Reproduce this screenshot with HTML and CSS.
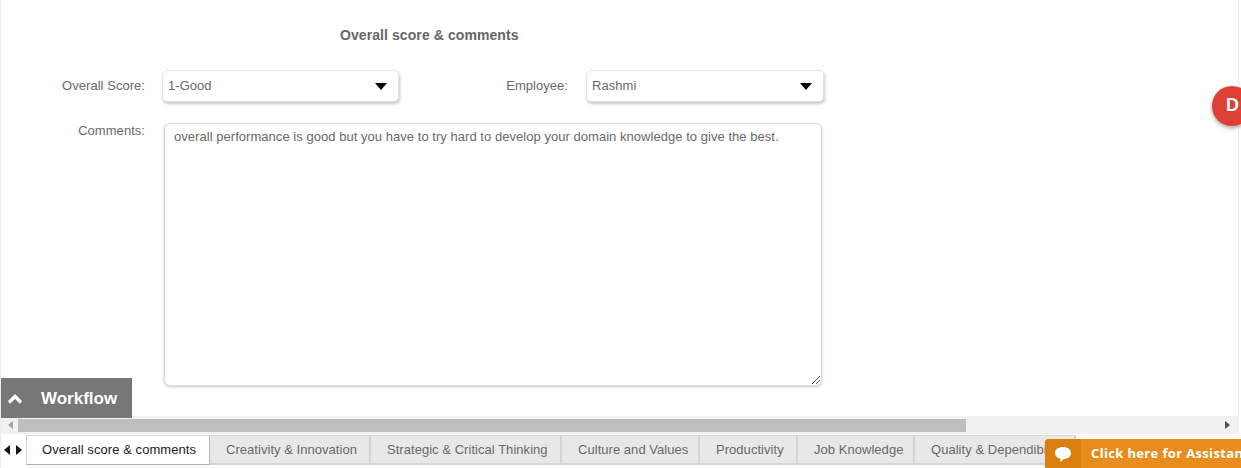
FILE: index.html
```html
<!DOCTYPE html>
<html lang="en">
<head>
<meta charset="utf-8">
<title>Overall score &amp; comments</title>
<link rel="stylesheet" href="styles.css">
</head>
<body>
<div class="page">
  <main class="content">
    <h1 class="title">Overall score &amp; comments</h1>
    <div class="row">
      <label class="label label-score">Overall Score:</label>
      <div class="select select-score"><span>1-Good</span><i class="caret"></i></div>
      <label class="label label-employee">Employee:</label>
      <div class="select select-employee"><span>Rashmi</span><i class="caret"></i></div>
    </div>
    <div class="row-comments">
      <label class="label label-comments">Comments:</label>
      <div class="textarea">overall performance is good but you have to try hard to develop your domain knowledge to give the best.
        <svg class="grip" width="8" height="8" viewBox="0 0 8 8"><path d="M0 8L8 0M4 8L8 4" stroke="#555" stroke-width="1" fill="none"/></svg>
      </div>
    </div>
  </main>
  <div class="hscroll">
    <svg class="arrow" width="5" height="8" viewBox="0 0 5 8"><path d="M5 0L0 4L5 8Z" fill="#a3a3a3"/></svg>
    <div class="track"><div class="thumb"></div></div>
    <svg class="arrow" width="5" height="8" viewBox="0 0 5 8"><path d="M0 0L5 4L0 8Z" fill="#505050"/></svg>
  </div>
  <nav class="tabbar">
    <div class="tabnav">
      <svg width="6" height="10" viewBox="0 0 6 10"><path d="M6 0L0 5L6 10Z" fill="#111"/></svg>
      <svg width="6" height="10" viewBox="0 0 6 10"><path d="M0 0L6 5L0 10Z" fill="#111"/></svg>
    </div>
    <div class="tab active">Overall score &amp; comments</div>
    <div class="tab tab-creativity">Creativity &amp; Innovation</div>
    <div class="tab tab-strategic">Strategic &amp; Critical Thinking</div>
    <div class="tab tab-culture">Culture and Values</div>
    <div class="tab tab-productivity">Productivity</div>
    <div class="tab tab-job">Job Knowledge</div>
    <div class="tab tab-quality">Quality &amp; Dependibility</div>
  </nav>
  <div class="workflow">
    <svg width="16" height="10" viewBox="0 0 16 10"><path d="M2 8.5L8 2.5L14 8.5" fill="none" stroke="#fff" stroke-width="3.4"/></svg>
    <span>Workflow</span>
  </div>
  <div class="badge">D</div>
  <div class="chat">
    <div class="chat-icon">
      <svg width="18" height="17" viewBox="0 0 18 17"><path d="M9 1C13.7 1 17 3.2 17 7C17 10.8 13.7 13 9.8 13L6.5 16L6.2 12.6C3 12 1 10 1 7C1 3.2 4.3 1 9 1Z" fill="#fff"/></svg>
    </div>
    <div class="chat-text">Click here for Assistance</div>
  </div>
</div>
</body>
</html>
```
FILE: styles.css
```css
* { box-sizing: border-box; }
html, body { margin: 0; padding: 0; }
body { font-family: "Liberation Sans", Arial, sans-serif; font-size: 13px; letter-spacing: .04px; color: #696969; background: #fff; overflow: hidden; }
.page { position: relative; width: 1241px; height: 468px; overflow: hidden; display: flex; flex-direction: column; border-left: 1px solid #ededed; }
.content { flex: 0 0 416px; border-right: 1px solid #f0f0f0; margin-right: 2px; padding-top: 27px; }
.title { margin: 0 0 27px 339px; font-size: 14px; line-height: 16px; font-weight: bold; letter-spacing: .08px; color: #666; }
.row { display: flex; align-items: flex-start; height: 32px; }
.label { line-height: 16px; text-align: right; }
.label-score { width: 144px; padding-top: 8px; }
.select { position: relative; height: 32px; border: 1px solid #e2e2e2; border-radius: 5px; box-shadow: 1px 2px 3px rgba(0,0,0,.22); padding: 7px 5px; line-height: 16px; background: #fff; }
.select-score { width: 237px; margin-left: 17px; }
.label-employee { width: 169px; padding-top: 8px; }
.select-employee { width: 238px; margin-left: 18px; }
.caret { position: absolute; right: 11px; top: 12px; width: 0; height: 0; border-left: 6px solid transparent; border-right: 6px solid transparent; border-top: 7px solid #000; }
.row-comments { display: flex; align-items: flex-start; margin-top: 21px; }
.label-comments { width: 144px; }
.textarea { position: relative; width: 658px; height: 263px; margin-left: 19px; border: 1px solid #dcdcdc; border-radius: 6px; box-shadow: 0 1px 3px rgba(0,0,0,.22); padding: 5px 9px; line-height: 16px; background: #fff; }
.grip { position: absolute; right: 1px; bottom: 1px; }
.hscroll { display: flex; align-items: center; height: 18px; background: #f1f1f1; padding: 0 9px 0 7px; gap: 5px; border-right: 2px solid #fff; }
.track { flex: 1; height: 13px; }
.thumb { width: 948px; height: 13px; background: #bdbdbd; }
.tabbar { display: flex; align-items: flex-start; height: 34px; background: #fff; padding-top: 1px; }
.tabnav { display: flex; gap: 6px; width: 25px; padding: 10px 0 0 3px; }
.tab { flex: none; height: 30px; padding: 6px 0 0 16px; line-height: 16px; background: #e8e8e8; border-top: 1px solid #d8d8d8; border-bottom: 2px solid #d8d8d8; border-right: 2px solid #d4d4d4; white-space: nowrap; overflow: hidden; }
.tab.active { width: 184px; background: #fff; color: #222; letter-spacing: .07px; border-left: 1px solid #d4d4d4; border-right: 1px solid #b8b8b8; border-bottom: 1px solid #aaa; padding-left: 15px; }
.tab-creativity { width: 161px; }
.tab-strategic { width: 191px; }
.tab-culture { width: 138px; }
.tab-productivity { width: 98px; }
.tab-job { width: 117px; }
.tab-quality { width: 161px; }
.workflow { position: absolute; left: 0; top: 378px; width: 131px; height: 40px; background: #777; color: #fff; display: flex; align-items: center; gap: 18px; padding: 1px 0 0 6px; font-size: 17px; font-weight: bold; letter-spacing: 0; }
.badge { position: absolute; left: 1211px; top: 86px; width: 40px; height: 40px; border-radius: 50%; background: #de4034; color: #fff; font-size: 18px; font-weight: bold; line-height: 38px; padding-left: 14px; letter-spacing: 0; box-shadow: 0 2px 4px rgba(0,0,0,.35); }
.chat { position: absolute; left: 1044px; top: 439px; height: 29px; width: 197px; display: flex; background: #e88d1c; color: #fff; font-family: "Open Sans", sans-serif; font-weight: bold; font-size: 13px; letter-spacing: .35px; border-radius: 4px 0 0 0; overflow: hidden; }
.chat-icon { width: 36px; flex: none; background: #d97f0f; display: flex; align-items: center; justify-content: center; padding-top: 2px; }
.chat-text { padding: 6px 0 0 10px; line-height: 16px; white-space: nowrap; }
```
